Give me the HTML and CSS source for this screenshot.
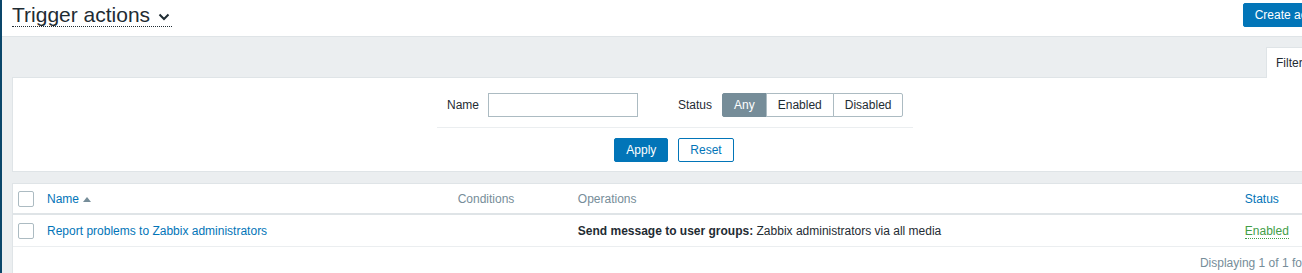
FILE: index.html
```html
<!DOCTYPE html>
<html lang="en">
<head>
    <meta charset="UTF-8">
    <meta name="viewport" content="width=device-width, initial-scale=1.0">
    <title>Configuration of actions</title>
    <link rel="stylesheet" href="styles.css">
</head>
<body>
    <div class="layout">
        <aside class="sidebar"></aside>
        <main class="wrapper">
            <header class="page-header">
                <h1 class="page-title">
                    <span class="title-link">Trigger actions
                        <svg class="title-arrow" width="12" height="8" viewBox="0 0 12 8"><path d="M1.5 1.5 L6 6 L10.5 1.5" fill="none" stroke="#1f2c33" stroke-width="2"/></svg>
                    </span>
                </h1>
                <button class="btn btn-create">Create action</button>
            </header>

            <div class="content">
                <div class="filter-tabs">
                    <div class="filter-tab">
                        Filter
                        <svg width="14" height="14" viewBox="0 0 14 14"><path d="M1 2 H13 L8.5 7.5 V12 L5.5 10.5 V7.5 Z" fill="#768d99"/></svg>
                    </div>
                </div>

                <form class="filter-panel">
                    <div class="filter-form">
                        <div class="filter-fields">
                            <label class="field-label">Name</label>
                            <input class="text-input" type="text">
                            <label class="field-label status-label">Status</label>
                            <div class="segmented">
                                <span class="segment active">Any</span>
                                <span class="segment">Enabled</span>
                                <span class="segment">Disabled</span>
                            </div>
                        </div>
                        <div class="filter-buttons">
                            <button type="button" class="btn">Apply</button>
                            <button type="button" class="btn btn-alt">Reset</button>
                        </div>
                    </div>
                </form>

                <div class="list">
                    <table class="list-table">
                        <colgroup>
                            <col class="col-check">
                            <col class="col-name">
                            <col class="col-cond">
                            <col class="col-ops">
                            <col class="col-status">
                        </colgroup>
                        <thead>
                            <tr>
                                <th><span class="checkbox"></span></th>
                                <th><a class="link">Name</a><span class="sort-up"></span></th>
                                <th>Conditions</th>
                                <th>Operations</th>
                                <th><a class="link">Status</a></th>
                            </tr>
                        </thead>
                        <tbody>
                            <tr>
                                <td><span class="checkbox"></span></td>
                                <td><a class="link">Report problems to Zabbix administrators</a></td>
                                <td></td>
                                <td><b>Send message to user groups:</b> Zabbix administrators via all media</td>
                                <td><a class="status-enabled">Enabled</a></td>
                            </tr>
                        </tbody>
                    </table>
                    <div class="table-stats">Displaying 1 of 1 found</div>
                </div>
            </div>
        </main>
    </div>
</body>
</html>
```

FILE: styles.css
```css
html, body {
    margin: 0;
    padding: 0;
    overflow: hidden;
}
body {
    font-family: "Liberation Sans", Arial, sans-serif;
    font-size: 12px;
    color: #1f2c33;
    background-color: #ebeef0;
}
.layout {
    display: flex;
    width: 1348px;
    min-height: 273px;
}
.sidebar {
    width: 2px;
    flex-shrink: 0;
    background-color: #0a466a;
}
.wrapper {
    flex: 1;
    display: flex;
    flex-direction: column;
}
.page-header {
    display: flex;
    justify-content: space-between;
    align-items: flex-start;
    height: 36px;
    padding: 0 10px;
    background-color: #fff;
    border-bottom: 1px solid #dfe4e7;
}
.page-title {
    margin: 3px 0 0;
    font-size: 21px;
    line-height: 23px;
    font-weight: normal;
}
.title-link {
    display: inline-flex;
    align-items: center;
    border-bottom: 1px dotted #1f2c33;
}
.title-arrow {
    margin: 4px 2px 0 8px;
}
.btn {
    height: 24px;
    padding: 0 11px;
    font-family: inherit;
    font-size: 12px;
    color: #fff;
    background-color: #0275b8;
    border: 1px solid #0275b8;
    border-radius: 2px;
    cursor: pointer;
}
.btn-create {
    margin-top: 3px;
}
.btn-alt {
    color: #0275b8;
    background-color: #fff;
}
.content {
    padding: 10px 10px 0;
}
.filter-tabs {
    display: flex;
    justify-content: flex-end;
}
.filter-tab {
    display: flex;
    align-items: center;
    gap: 8px;
    width: 72px;
    height: 31px;
    padding: 0 9px;
    box-sizing: border-box;
    background-color: #fff;
    border: 1px solid #dfe4e7;
    border-bottom: none;
    margin-bottom: -1px;
    z-index: 1;
}
.filter-tab svg {
    flex-shrink: 0;
}
.filter-panel {
    margin: 0;
    padding: 15px 0 9px;
    background-color: #fff;
    border: 1px solid #dfe4e7;
}
.filter-form {
    width: 476px;
    margin: 0 auto;
}
.filter-fields {
    display: flex;
    align-items: center;
    padding: 0 10px 10px;
    border-bottom: 1px solid #ebeef0;
}
.field-label {
    margin-right: 9px;
}
.status-label {
    margin-left: 40px;
    margin-right: 10px;
}
.text-input {
    width: 150px;
    height: 24px;
    box-sizing: border-box;
    padding: 0 5px;
    border: 1px solid #acbbc2;
    font-family: inherit;
    font-size: 12px;
}
.segmented {
    display: flex;
}
.segment {
    height: 22px;
    line-height: 22px;
    padding: 0 11px;
    border: 1px solid #acbbc2;
    margin-left: -1px;
    background-color: #fff;
}
.segment:first-child {
    margin-left: 0;
    border-radius: 2px 0 0 2px;
}
.segment:last-child {
    border-radius: 0 2px 2px 0;
}
.segment.active {
    color: #fff;
    background-color: #768d99;
    border-color: #768d99;
}
.filter-buttons {
    display: flex;
    justify-content: center;
    gap: 10px;
    margin-top: 10px;
    padding-right: 2px;
}
.list {
    margin-top: 11px;
    background-color: #fff;
    border: 1px solid #dfe4e7;
    border-bottom: none;
}
.list-table {
    width: 100%;
    border-collapse: collapse;
    table-layout: fixed;
}
.col-check { width: 29px; }
.col-name { width: 410px; }
.col-cond { width: 120px; }
.col-ops { width: 666px; }
.col-status { width: 97px; }
.list-table th {
    height: 29px;
    padding: 0 5px;
    text-align: left;
    font-weight: normal;
    color: #768d99;
    border-bottom: 2px solid #dfe4e7;
    vertical-align: middle;
}
.list-table td {
    height: 30px;
    padding: 1px 5px 0;
    border-bottom: 1px solid #ebeef0;
    vertical-align: middle;
}
.link {
    color: #0275b8;
    cursor: pointer;
}
.sort-up {
    display: inline-block;
    margin-left: 4px;
    border-left: 4px solid transparent;
    border-right: 4px solid transparent;
    border-bottom: 5px solid #768d99;
    vertical-align: 1px;
}
.checkbox {
    display: block;
    width: 14px;
    height: 14px;
    border: 1px solid #acbbc2;
    border-radius: 2px;
    background-color: #fff;
}
.status-enabled {
    color: #429e47;
    border-bottom: 1px dotted #429e47;
    cursor: pointer;
}
.table-stats {
    padding: 9px 15px 20px 5px;
    text-align: right;
    color: #768d99;
}
```
